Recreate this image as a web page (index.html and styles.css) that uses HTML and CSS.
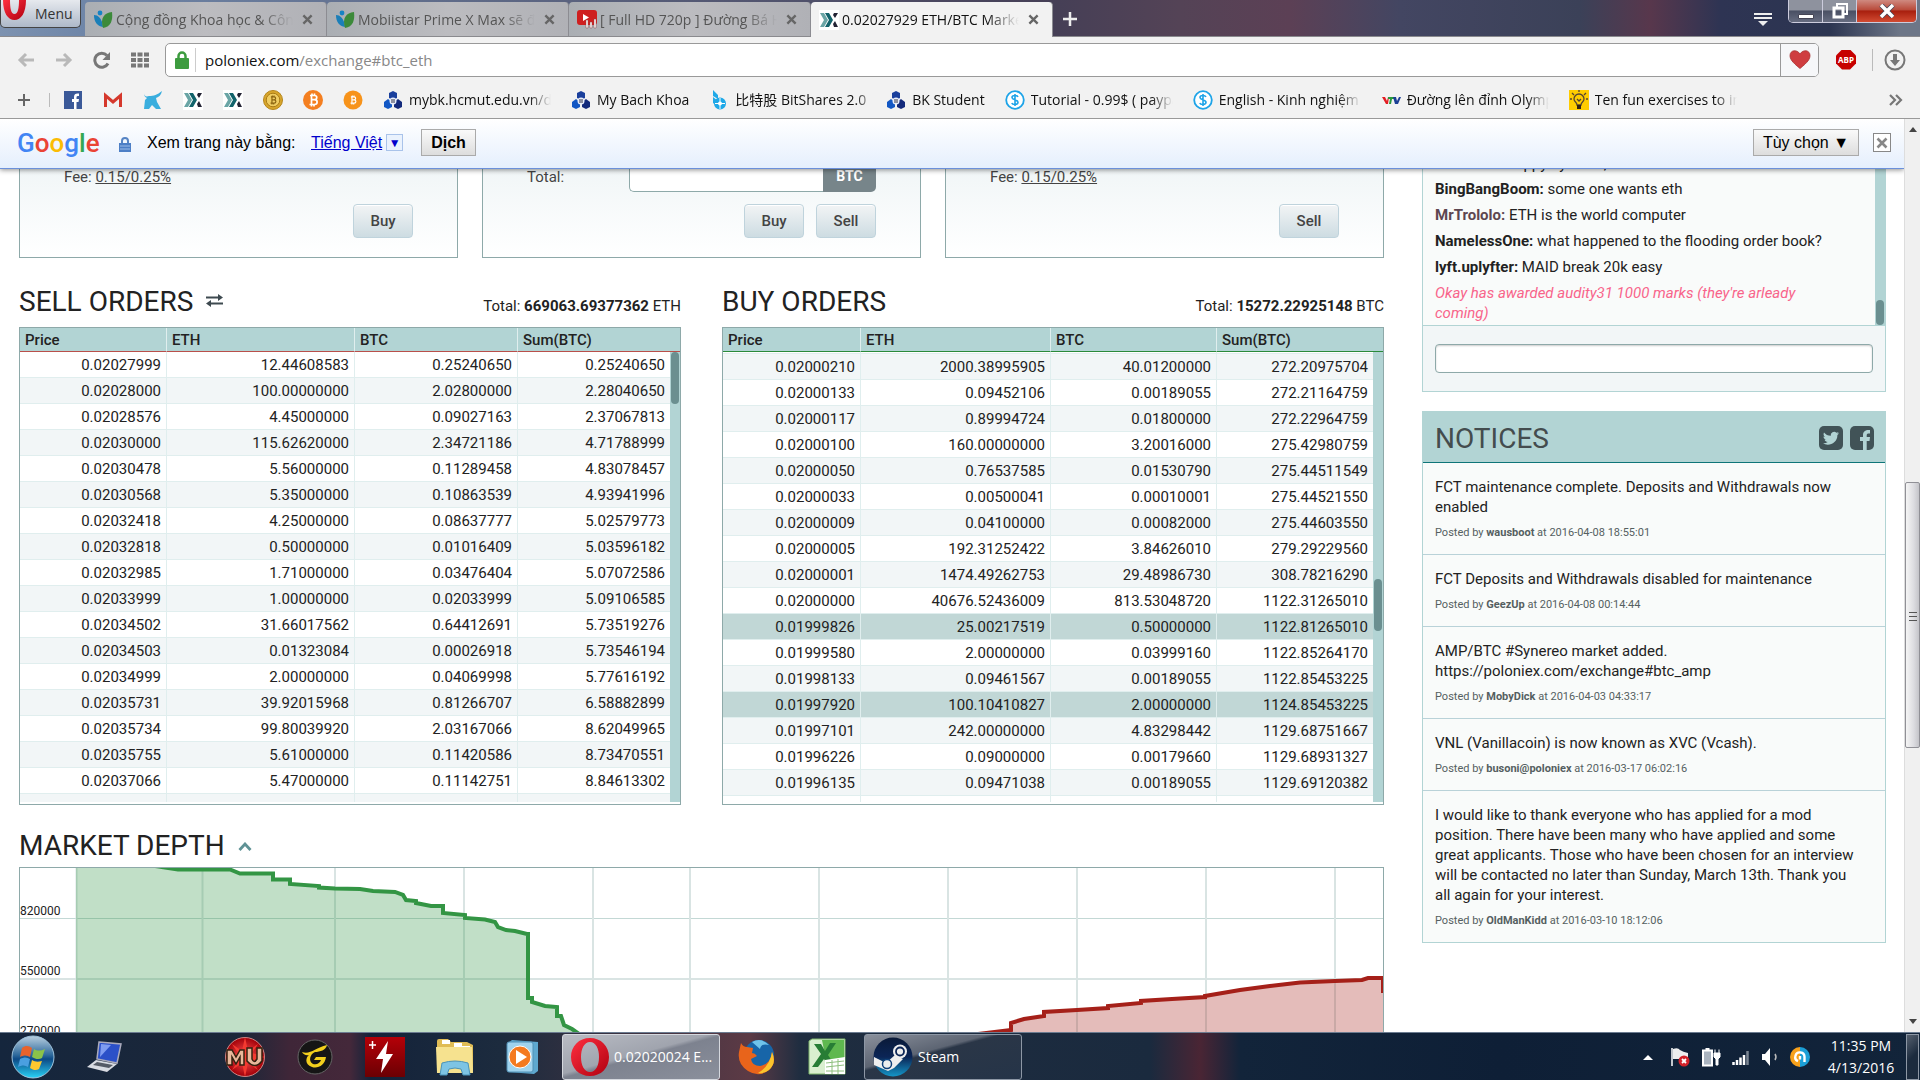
FILE: index.html
```html
<!DOCTYPE html>
<html lang="vi">
<head>
<meta charset="utf-8">
<title>0.02027929 ETH/BTC Market - Poloniex</title>
<link rel="stylesheet" href="styles.css">
</head>
<body>
<svg class="defs" width="0" height="0" aria-hidden="true">
  <defs>
    <linearGradient id="orb" x1="0" y1="0" x2="0" y2="1"><stop offset="0" stop-color="#b9cfe0"/><stop offset=".45" stop-color="#2f6a9c"/><stop offset=".55" stop-color="#0d4a86"/><stop offset="1" stop-color="#28d3f7"/></linearGradient>
    <linearGradient id="redsq" x1="0" y1="0" x2="0" y2="1"><stop offset="0" stop-color="#b50008"/><stop offset="1" stop-color="#6b0003"/></linearGradient>
    <radialGradient id="mu"><stop offset="0" stop-color="#f55"/><stop offset="1" stop-color="#a30008"/></radialGradient>
    <linearGradient id="steam" x1="0" y1="0" x2="0" y2="1"><stop offset="0" stop-color="#0a1a38"/><stop offset=".5" stop-color="#0b2556"/><stop offset="1" stop-color="#1496c8"/></linearGradient>
    <linearGradient id="opera" x1="0" y1="0" x2="1" y2="1"><stop offset="0" stop-color="#ff3040"/><stop offset="1" stop-color="#b00010"/></linearGradient>
    <symbol id="i-leaf" viewBox="0 0 20 20"><circle cx="7" cy="4" r="2.400" fill="#1683c4"/><path d="M1 6c4 0 8 3 9 12C4 17 1 13 1 6z" fill="#1b7fb8"/><path d="M19 3C11 4 7 9 10 19c8-1 10-8 9-16z" fill="#3c8a3a"/></symbol>
    <symbol id="i-x" viewBox="0 0 12 12"><path d="M1.500 1.500l9 9M10.500 1.500l-9 9" stroke="currentColor" stroke-width="2.600" fill="none"/></symbol>
    <symbol id="i-polo" viewBox="0 0 20 20"><path fill="#fff" d="M0 0h20v20H0z"/><path d="M1 3h4l4 7-4 7H1l4-7z" fill="#6aa5a5"/><path d="M6 3h4l4 7-4 7H6l4-7z" fill="#12636b"/><path d="M15 3h4l-3 5-2-3zM14 14l2-3 3 6h-4z" fill="#223"/></symbol>
    <symbol id="i-bk" viewBox="0 0 20 20"><path d="M10 1l4 2v5l-4 2-4-2V3z" fill="#1a3f9c"/><path d="M5 9l4 3v5l-4 2-4-2v-5z" fill="#1257c4"/><path d="M15 9l4 3v5l-4 2-4-2v-5z" fill="#132a7c"/><circle cx="10" cy="11" r="3.500" fill="#e8eefc"/><path d="M8 10h4M8 12h4" stroke="#334" stroke-width="1"/></symbol>
    <symbol id="i-dollar" viewBox="0 0 20 20"><circle cx="10" cy="10" r="8.800" fill="#fff" stroke="#1ea4e8" stroke-width="1.800"/><path d="M13 7c-1-2-6-2-6 .5S13 9.500 13 12.300 7.500 15 6.800 13M10 4v12" stroke="#1ea4e8" stroke-width="1.600" fill="none"/></symbol>
    <symbol id="i-btc" viewBox="0 0 20 20"><path d="M7 5.500h4.500c3 0 3 4 0 4.200H8m3.500 0c3.500 0 3.500 4.800 0 4.800H6.500M8.500 5.500v9M9 3.500v2m2.500-2v2M8.500 14.500v2m2.500-2v2" stroke="currentColor" stroke-width="1.700" fill="none"/></symbol>
  </defs>
</svg>

<header class="titlebar">
  <button class="menu" type="button">
    <svg width="28" height="22" viewBox="0 0 28 22"><path d="M2 0C2 13 7 20 13.500 20S25 13 25 0h-7c0 8-1 14-4.500 14S9 8 9 0z" fill="url(#opera)"/></svg>
    <span>Menu</span>
  </button>
  <nav class="tabs">
    <a class="tab" href="#"><svg width="20" height="20"><use href="#i-leaf"/></svg><span class="tab-text">Cộng đồng Khoa học &amp; Công nghệ</span><svg class="close" width="11" height="11"><use href="#i-x"/></svg></a>
    <a class="tab" href="#"><svg width="20" height="20"><use href="#i-leaf"/></svg><span class="tab-text">Mobiistar Prime X Max sẽ được</span><svg class="close" width="11" height="11"><use href="#i-x"/></svg></a>
    <a class="tab" href="#"><svg width="20" height="20" viewBox="0 0 20 20"><rect y="1" width="20" height="15" rx="3" fill="#cf1f1f"/><path d="M6 5l6 3.500L6 12z" fill="#fff"/><path d="M9 19v-8h2v8zM13 19v-6h2v6zM17 19v-9h2v9z" fill="#fff" stroke="#844" stroke-width=".5"/></svg><span class="tab-text">[ Full HD 720p ] Đường Bá Hổ</span><svg class="close" width="11" height="11"><use href="#i-x"/></svg></a>
    <a class="tab active" href="#"><svg width="20" height="20"><use href="#i-polo"/></svg><span class="tab-text">0.02027929 ETH/BTC Market</span><svg class="close" width="11" height="11"><use href="#i-x"/></svg></a>
  </nav>
  <button class="newtab" type="button" aria-label="New tab"><svg width="14" height="14" viewBox="0 0 14 14"><path d="M7 0v14M0 7h14" stroke="#eee" stroke-width="2.500"/></svg></button>
  <svg class="tabmenu" width="18" height="14" viewBox="0 0 18 14"><path d="M0 1h18M0 5h18" stroke="#eee" stroke-width="2"/><path d="M4 8h10l-5 5z" fill="#eee"/></svg>
  <div class="controls">
    <button type="button" aria-label="Minimize"><svg width="18" height="18" viewBox="0 0 18 18"><path d="M1.500 12.500h15v4h-15z" fill="#fff" stroke="#445"/></svg></button>
    <button type="button" aria-label="Restore"><svg width="18" height="18" viewBox="0 0 18 18"><path d="M6 5V2h10v10h-3" fill="none" stroke="#fff" stroke-width="2"/><path d="M3 6h9v9H3z" fill="none" stroke="#fff" stroke-width="3"/></svg></button>
    <button class="shut" type="button" aria-label="Close window"><svg width="16" height="14" viewBox="0 0 16 14"><path d="M2 1l12 12M14 1L2 13" stroke="#445" stroke-width="5"/><path d="M2 1l12 12M14 1L2 13" stroke="#fff" stroke-width="3.500"/></svg></button>
  </div>
</header>

<div class="toolbar">
  <svg width="18" height="16" viewBox="0 0 18 16"><path d="M17 8H3M9 2L3 8l6 6" stroke="#b9b9b9" stroke-width="3" fill="none"/></svg>
  <svg width="18" height="16" viewBox="0 0 18 16"><path d="M1 8h14M9 2l6 6-6 6" stroke="#b9b9b9" stroke-width="3" fill="none"/></svg>
  <svg width="18" height="18" viewBox="0 0 18 18"><path d="M15 12.500A7 7 0 1 1 14 4.500" stroke="#777" stroke-width="3" fill="none"/><path d="M17 1v8H9.500z" fill="#777"/></svg>
  <svg width="18" height="16" viewBox="0 0 18 16"><path d="M0 2.500h18M0 8h18M0 13.500h18" stroke="#777" stroke-width="4" stroke-dasharray="5 1.500"/></svg>
  <div class="address">
    <svg width="14" height="18" viewBox="0 0 14 18"><path d="M3.500 9V5a3.500 3.500 0 0 1 7 0v4" stroke="#3d9c3f" stroke-width="2.500" fill="none"/><rect y="7" width="14" height="11" rx="1" fill="#3d9c3f"/></svg>
    <p class="url">poloniex.com<span>/exchange#btc_eth</span></p>
    <button class="heart" type="button" aria-label="Bookmark"><svg width="22" height="19" viewBox="0 0 22 19"><path d="M11 18.500C3 12 1 9 1 5.500 1 0 8-1 11 4c3-5 10-4 10 1.500 0 3.500-2 6.500-10 13z" fill="#cf3d40" stroke="#a33" stroke-width=".8"/></svg></button>
  </div>
  <div class="abp">ABP</div>
  <svg class="download" width="22" height="22" viewBox="0 0 22 22"><circle cx="11" cy="11" r="9.500" fill="none" stroke="#777" stroke-width="2"/><path d="M9 5h4v6h3l-5 6-5-6h3z" fill="#777"/></svg>
</div>

<nav class="bookmarks">
  <svg class="plus" width="14" height="14" viewBox="0 0 14 14"><path d="M7 1v12M1 7h12" stroke="#666" stroke-width="2"/></svg>
  <a href="#" aria-label="Facebook"><svg width="20" height="20" viewBox="0 0 20 20"><rect x="1" y="1" width="18" height="18" fill="#3b5998"/><path d="M11 19v-7H9V9h2V7c0-3 2-4 5-3.500V6c-2 0-2.500 0-2.500 1.500V9H16l-.5 3h-2v7z" fill="#fff"/></svg></a>
  <a href="#" aria-label="Gmail"><svg width="20" height="20" viewBox="0 0 20 20"><rect x="1" y="4" width="18" height="13" fill="#f2f2f2"/><path d="M2.500 17V5.500L10 12l7.500-6.500V17" stroke="#d5382c" stroke-width="3" fill="none"/></svg></a>
  <a href="#" aria-label="Bull"><svg width="20" height="20" viewBox="0 0 20 20"><path d="M1 3c0 3 2 4 5 3 5 0 8-1 13-5-1 4-3 6-6 7l1 4 4 7h-5l-4-4-3 4H1l1-9 2-2C2 7 1 6 1 3z" fill="#3aaede"/></svg></a>
  <a href="#" aria-label="Poloniex"><svg width="20" height="20"><use href="#i-polo"/></svg></a>
  <a href="#" aria-label="Poloniex"><svg width="20" height="20"><use href="#i-polo"/></svg></a>
  <a class="gold" href="#" aria-label="Bitcoin"><svg width="20" height="20" viewBox="0 0 20 20"><circle cx="10" cy="10" r="9.500" fill="#d8a62c" stroke="#b5851b"/><circle cx="10" cy="10" r="6.800" fill="#f0cd62" stroke="#a97a15"/><use href="#i-btc" x="3" y="3" width="14" height="14"/></svg></a>
  <a class="white" href="#" aria-label="Bitcoin"><svg width="20" height="20" viewBox="0 0 20 20"><circle cx="10" cy="10" r="10" fill="#f47f20"/><use href="#i-btc" width="20" height="20"/></svg></a>
  <a class="white" href="#" aria-label="Bitcoin"><svg width="20" height="20" viewBox="0 0 20 20"><circle cx="10" cy="10" r="9.500" fill="#f7931a"/><use href="#i-btc" x="3" y="3" width="14" height="14"/></svg></a>
  <a href="#"><svg width="20" height="20"><use href="#i-bk"/></svg><span>mybk.hcmut.edu.vn/dkmh</span></a>
  <a href="#"><svg width="20" height="20"><use href="#i-bk"/></svg><span>My Bach Khoa</span></a>
  <a href="#"><svg width="20" height="20" viewBox="0 0 20 20"><path d="M4 0l5 5v4l-5-3zM4 7l5 4v6l-5-4z" fill="#1fa9e8"/><circle cx="11" cy="13.500" r="4" fill="#fff" stroke="#1fa9e8" stroke-width="4"/><path d="M11 8v11M6 13.500h10" stroke="#fff" stroke-width="1"/></svg><span>比特股 BitShares 2.0</span></a>
  <a href="#"><svg width="20" height="20"><use href="#i-bk"/></svg><span>BK Student</span></a>
  <a href="#"><svg width="20" height="20"><use href="#i-dollar"/></svg><span>Tutorial - 0.99$ ( paypal )</span></a>
  <a href="#"><svg width="20" height="20"><use href="#i-dollar"/></svg><span>English - Kinh nghiệm học</span></a>
  <a href="#"><svg width="20" height="20" viewBox="0 0 20 20"><path d="M1 7h3l2 4 1-4h1l-1 7H5z" fill="#e31e24"/><path d="M7 7h6v2h-2l-1 5H8l1-5H7z" fill="#2a9a3c"/><path d="M12 7h3l1 4 2-4h2l-3 7h-3z" fill="#1c3f95"/></svg><span>Đường lên đỉnh Olympia</span></a>
  <a href="#"><svg width="20" height="20" viewBox="0 0 20 20"><path fill="#fc0" d="M0 0h20v20H0z"/><path d="M8 15c0-3-3-3-3-6a5 5 0 0 1 10 0c0 3-3 3-3 6zM10 0v2M3 3l2 2M17 3l-2 2M1 9h2M17 9h2M8 9l2 2 2-2" stroke="#543" stroke-width="1.300" fill="none"/><path d="M8 15h4v4H8z" fill="#321"/></svg><span>Ten fun exercises to improve</span></a>
  <svg class="more" width="14" height="12" viewBox="0 0 14 12"><path d="M1 1l5 5-5 5M7 1l5 5-5 5" stroke="#777" stroke-width="2.200" fill="none"/></svg>
</nav>

<div class="window">
  <div class="frame">
    <div class="translate">
      <span class="google"><b class="bl">G</b><b class="re">o</b><b class="ye">o</b><b class="bl">g</b><b class="gr">l</b><b class="re">e</b></span>
      <svg class="lock" width="12" height="15" viewBox="0 0 12 15"><path d="M3 7V4a3 3 0 0 1 6 0v3" stroke="#5684c4" stroke-width="2" fill="none"/><path d="M0 6h12v9H0z" fill="#4d7fc6"/><path d="M1 9h10M1 12h10" stroke="#9dbde8"/></svg>
      <span class="ask">Xem trang này bằng:</span>
      <a class="lang" href="#">Tiếng Việt</a>
      <button class="drop" type="button" aria-label="Choose language">▼</button>
      <button class="grey strong" type="button">Dịch</button>
      <button class="grey options" type="button">Tùy chọn ▼</button>
      <button class="dismiss" type="button" aria-label="Close"><svg width="12" height="12"><use href="#i-x"/></svg></button>
    </div>

    <div class="page">
      <main class="main">
        <section class="trades">
          <form class="trade">
            <p class="fee">Fee: <a href="#">0.15/0.25%</a></p>
            <div class="actions"><button class="btn" type="button">Buy</button></div>
          </form>
          <form class="trade">
            <div class="total"><label for="total">Total:</label><input id="total" type="text"><span>BTC</span></div>
            <div class="actions"><button class="btn" type="button">Buy</button><button class="btn" type="button">Sell</button></div>
          </form>
          <form class="trade">
            <p class="fee">Fee: <a href="#">0.15/0.25%</a></p>
            <div class="actions"><button class="btn" type="button">Sell</button></div>
          </form>
        </section>

        <div class="orders">
          <section>
            <div class="head"><h2>SELL ORDERS <svg class="swap" width="17" height="13" viewBox="0 0 17 13"><path d="M0 3.500h13M17 9.500H4" stroke="#3e4a50" stroke-width="2.200"/><path d="M12 0l5 3.500L12 7zM5 6L0 9.500 5 13z" fill="#3e4a50"/></svg></h2><p>Total: <b>669063.69377362</b> ETH</p></div>
            <div class="book sell">
              <div class="clip">
              <table>
                <thead><tr><th>Price</th><th>ETH</th><th>BTC</th><th>Sum(BTC)</th></tr></thead>
                <tbody>
                  <tr><td>0.02027999</td><td>12.44608583</td><td>0.25240650</td><td>0.25240650</td></tr>
                  <tr><td>0.02028000</td><td>100.00000000</td><td>2.02800000</td><td>2.28040650</td></tr>
                  <tr><td>0.02028576</td><td>4.45000000</td><td>0.09027163</td><td>2.37067813</td></tr>
                  <tr><td>0.02030000</td><td>115.62620000</td><td>2.34721186</td><td>4.71788999</td></tr>
                  <tr><td>0.02030478</td><td>5.56000000</td><td>0.11289458</td><td>4.83078457</td></tr>
                  <tr><td>0.02030568</td><td>5.35000000</td><td>0.10863539</td><td>4.93941996</td></tr>
                  <tr><td>0.02032418</td><td>4.25000000</td><td>0.08637777</td><td>5.02579773</td></tr>
                  <tr><td>0.02032818</td><td>0.50000000</td><td>0.01016409</td><td>5.03596182</td></tr>
                  <tr><td>0.02032985</td><td>1.71000000</td><td>0.03476404</td><td>5.07072586</td></tr>
                  <tr><td>0.02033999</td><td>1.00000000</td><td>0.02033999</td><td>5.09106585</td></tr>
                  <tr><td>0.02034502</td><td>31.66017562</td><td>0.64412691</td><td>5.73519276</td></tr>
                  <tr><td>0.02034503</td><td>0.01323084</td><td>0.00026918</td><td>5.73546194</td></tr>
                  <tr><td>0.02034999</td><td>2.00000000</td><td>0.04069998</td><td>5.77616192</td></tr>
                  <tr><td>0.02035731</td><td>39.92015968</td><td>0.81266707</td><td>6.58882899</td></tr>
                  <tr><td>0.02035734</td><td>99.80039920</td><td>2.03167066</td><td>8.62049965</td></tr>
                  <tr><td>0.02035755</td><td>5.61000000</td><td>0.11420586</td><td>8.73470551</td></tr>
                  <tr><td>0.02037066</td><td>5.47000000</td><td>0.11142751</td><td>8.84613302</td></tr>
                  <tr><td></td><td></td><td></td><td></td></tr>
                </tbody>
              </table>
              <div class="track"><div class="thumb"></div></div>
              </div>
            </div>
          </section>
          <section>
            <div class="head"><h2>BUY ORDERS</h2><p>Total: <b>15272.22925148</b> BTC</p></div>
            <div class="book buy">
              <div class="clip">
              <table>
                <thead><tr><th>Price</th><th>ETH</th><th>BTC</th><th>Sum(BTC)</th></tr></thead>
                <tbody>
                  <tr class="cut"><td></td><td></td><td></td><td></td></tr>
                  <tr><td>0.02000210</td><td>2000.38995905</td><td>40.01200000</td><td>272.20975704</td></tr>
                  <tr><td>0.02000133</td><td>0.09452106</td><td>0.00189055</td><td>272.21164759</td></tr>
                  <tr><td>0.02000117</td><td>0.89994724</td><td>0.01800000</td><td>272.22964759</td></tr>
                  <tr><td>0.02000100</td><td>160.00000000</td><td>3.20016000</td><td>275.42980759</td></tr>
                  <tr><td>0.02000050</td><td>0.76537585</td><td>0.01530790</td><td>275.44511549</td></tr>
                  <tr><td>0.02000033</td><td>0.00500041</td><td>0.00010001</td><td>275.44521550</td></tr>
                  <tr><td>0.02000009</td><td>0.04100000</td><td>0.00082000</td><td>275.44603550</td></tr>
                  <tr><td>0.02000005</td><td>192.31252422</td><td>3.84626010</td><td>279.29229560</td></tr>
                  <tr><td>0.02000001</td><td>1474.49262753</td><td>29.48986730</td><td>308.78216290</td></tr>
                  <tr><td>0.02000000</td><td>40676.52436009</td><td>813.53048720</td><td>1122.31265010</td></tr>
                  <tr class="flash"><td>0.01999826</td><td>25.00217519</td><td>0.50000000</td><td>1122.81265010</td></tr>
                  <tr><td>0.01999580</td><td>2.00000000</td><td>0.03999160</td><td>1122.85264170</td></tr>
                  <tr><td>0.01998133</td><td>0.09461567</td><td>0.00189055</td><td>1122.85453225</td></tr>
                  <tr class="flash"><td>0.01997920</td><td>100.10410827</td><td>2.00000000</td><td>1124.85453225</td></tr>
                  <tr><td>0.01997101</td><td>242.00000000</td><td>4.83298442</td><td>1129.68751667</td></tr>
                  <tr><td>0.01996226</td><td>0.09000000</td><td>0.00179660</td><td>1129.68931327</td></tr>
                  <tr><td>0.01996135</td><td>0.09471038</td><td>0.00189055</td><td>1129.69120382</td></tr>
                  <tr><td></td><td></td><td></td><td></td></tr>
                </tbody>
              </table>
              <div class="track"><div class="thumb"></div></div>
              </div>
            </div>
          </section>
        </div>

        <section class="depth">
          <div class="head"><h2>MARKET DEPTH <svg class="caret" width="14" height="9" viewBox="0 0 14 9"><path d="M1.500 8L7 2l5.500 6" stroke="#5f9295" stroke-width="2.800" fill="none"/></svg></h2></div>
          <div class="chart">
            <svg viewBox="20 868 1363 168" preserveAspectRatio="none">
              <path d="M20 918.500H1383" stroke="#c3d8d5" stroke-width="1"/>
              <path d="M20 979H1383M76.500 868v168M202.500 868v168M335 868v168M464 868v168M593 868v168M690 868v168M819 868v168M948 868v168M1077 868v168M1206 868v168M1335 868v168" stroke="#d9e4e3" stroke-width="2"/>
              <path d="M76 868H155L178 870H230L240 874H273V880H290V884L319 887L335 888L360 889L373 891L395 892L403 895L406 900L416 901V903L431 906H443V913L465 915V918L485 919L495 922L498 927L506 930L515 931L528 934V998H532V1002L545 1006L557 1007V1016H561L564 1025L572 1029L582 1036H76z" fill="#339544" fill-opacity=".3"/>
              <path d="M155 866L178 869.500H230L240 873.500H273V879.500H290V884L319 886V887.500L335 888.500L360 889L373 891L395 892L403 895L406 900L416 901V903L431 906H443V913L465 915V918L485 919.500L495 922L498 927L506 930L515 931L527 934H528V998H532V1002L545 1006L557 1007V1016H561L564 1025L572 1029L582 1036" stroke="#339544" stroke-width="4" fill="none"/>
              <path d="M978 1034L1011 1030V1023L1024 1019L1044 1016V1012L1077 1010L1108 1008V1006L1141 1003V1001L1172 999L1205 997V996L1240 990L1270 986L1300 982L1335 981L1362 980L1368 978H1383V1036H978z" fill="#a52019" fill-opacity=".3"/>
              <path d="M978 1034L1011 1030V1023L1024 1019L1044 1016V1012L1077 1010L1108 1008V1006L1141 1003V1001L1172 999L1205 997V996L1240 990L1270 986L1300 982.500L1335 981L1362 980L1368 978H1383V993" stroke="#a52019" stroke-width="4" fill="none"/>
            </svg>
            <div class="ticks"><span>820000</span><span>550000</span><span>270000</span></div>
          </div>
        </section>
      </main>

      <aside class="side">
        <section class="chat">
          <div class="log">
            <p class="above">happy by noon,</p>
            <p><b>BingBangBoom:</b> some one wants eth</p>
            <p><b class="muted">MrTrololo:</b> ETH is the world computer</p>
            <p><b>NamelessOne:</b> what happened to the flooding order book?</p>
            <p><b>lyft.uplyfter:</b> MAID break 20k easy</p>
            <p class="award">Okay has awarded audity31 1000 marks (they're arleady coming)</p>
            <div class="track"><div class="thumb"></div></div>
          </div>
          <div class="say"><input type="text" aria-label="Chat message"></div>
        </section>

        <section class="notices">
          <header><h2>NOTICES</h2>
            <a href="#" aria-label="Twitter"><svg width="24" height="24" viewBox="0 0 24 24"><rect width="24" height="24" rx="5" fill="#415357"/><path d="M20 7.300c-.6.300-1.200.4-1.900.5.700-.4 1.200-1 1.400-1.800-.6.400-1.300.6-2.100.8a3.300 3.300 0 0 0-5.600 3C9 9.700 6.600 8.400 5 6.400c-.9 1.500-.4 3.400 1 4.400-.5 0-1-.2-1.500-.4 0 1.600 1.100 2.900 2.600 3.200-.5.100-1 .2-1.500.1.400 1.300 1.600 2.200 3.100 2.300A6.600 6.600 0 0 1 4 17.300c5.500 3.500 14.600 0 14.400-8.300.6-.5 1.200-1 1.600-1.700z" fill="#b2d4d4"/></svg></a>
            <a href="#" aria-label="Facebook"><svg width="24" height="24" viewBox="0 0 24 24"><rect width="24" height="24" rx="5" fill="#415357"/><path d="M13 24v-9h-3v-4h3V9c0-4 3-5.500 7-5v3.500c-2.500-.2-3.300.2-3.300 2V11H20l-.5 4h-2.800v9z" fill="#b2d4d4"/></svg></a>
          </header>
          <article><p>FCT maintenance complete. Deposits and Withdrawals now enabled</p><small>Posted by <b>wausboot</b> at 2016-04-08 18:55:01</small></article>
          <article><p>FCT Deposits and Withdrawals disabled for maintenance</p><small>Posted by <b>GeezUp</b> at 2016-04-08 00:14:44</small></article>
          <article><p>AMP/BTC #Synereo market added. https://poloniex.com/exchange#btc_amp</p><small>Posted by <b>MobyDick</b> at 2016-04-03 04:33:17</small></article>
          <article><p>VNL (Vanillacoin) is now known as XVC (Vcash).</p><small>Posted by <b>busoni@poloniex</b> at 2016-03-17 06:02:16</small></article>
          <article><p>I would like to thank everyone who has applied for a mod position. There have been many who have applied and some great applicants. Those who have been chosen for an interview will be contacted no later than Sunday, March 13th. Thank you all again for your interest.</p><small>Posted by <b>OldManKidd</b> at 2016-03-10 18:12:06</small></article>
        </section>
      </aside>
    </div>
  </div>
  <div class="scroll">
    <svg width="8" height="5" viewBox="0 0 8 5"><path d="M0 5l4-5 4 5z" fill="#444"/></svg>
    <div class="rail"><div class="grip"></div></div>
    <svg width="8" height="5" viewBox="0 0 8 5"><path d="M0 0l4 5 4-5z" fill="#444"/></svg>
  </div>
</div>

<footer class="taskbar">
  <button class="slot orb" type="button" aria-label="Start"><svg width="44" height="44" viewBox="0 0 44 44"><circle cx="22" cy="22" r="21" fill="url(#orb)" stroke="#9fc3dc" stroke-width="1"/><path d="M11 13c4-3 7-2 10 0l-2 9c-3-2-6-2-10 0z" fill="#e8632c"/><path d="M23 14c3 2 7 2 11 0l-3 9c-3 2-7 1-10-1z" fill="#8bc34a"/><path d="M9 24c4-2 7-2 10 0l-2 8c-3-2-6-2-10 0z" fill="#4a9fe0"/><path d="M21 25c3 2 6 2 10 1l-3 8c-3 2-6 1-9-1z" fill="#fdc82f"/></svg></button>
  <button class="slot" type="button" aria-label="Computer"><svg width="40" height="36" viewBox="0 0 40 36"><path d="M14 3l22 2-4 19-20-4z" fill="#2b50c8" stroke="#aab" stroke-width="1.500"/><path d="M16 5l10 1-11 12z" fill="#7f9cf0"/><path d="M11 21l21 4-10 8L2 28z" fill="#d8dbe2"/><path d="M12 23l16 3-4 3-16-3z" fill="#555b66"/></svg></button>
  <span class="slot"></span>
  <button class="slot" type="button" aria-label="MU"><svg width="42" height="42" viewBox="0 0 42 42"><circle cx="21" cy="21" r="19.500" fill="url(#mu)" stroke="#c88"/><path d="M21 1l3 14 10-7-6 9 13 4-13 4 6 9-10-7-3 14-3-14-10 7 6-9-13-4 13-4-6-9 10 7z" fill="#f43a30"/><path d="M3 29V14h5l4 7 4-7h4v15h-4v-8l-4 7-4-7v8zM23 12h5v11q2 5 5 0V12h5v13q-7 9-15 0z" fill="#e8b89c" stroke="#321" stroke-width="1.500"/></svg></button>
  <button class="slot" type="button" aria-label="Garena"><svg width="36" height="40" viewBox="0 0 36 40"><circle cx="18" cy="20" r="17" fill="#151515" stroke="#666"/><path d="M5 15c8 3 13-4 25-7-1 5-7 7-12 7-5 2-7 9-2 12 4 1 7-1 8-4h-7l2-3h10c-1 8-8 12-14 10-8-3-6-10-3-12-3 1-6-1-7-3z" fill="#f2cf1d"/></svg></button>
  <button class="slot" type="button" aria-label="Flash"><svg width="40" height="40" viewBox="0 0 40 40"><path fill="url(#redsq)" d="M0 0h40v40H0z"/><path d="M4 8h7M7.500 4v8" stroke="#fff" stroke-width="1.500"/><path d="M23 4L11 22h7l-2 14 12-19h-7z" fill="#fff"/></svg></button>
  <button class="slot" type="button" aria-label="Explorer"><svg width="42" height="40" viewBox="0 0 42 40"><path d="M3 4q0-2 2-2h9l3 3h16l6 3v27H3z" fill="#e0bc55"/><path d="M8 3h8v4H8zM20 6h8v4h-8zM28 9h8v4h-8z" fill="#fff"/><path d="M2 10h36l1 26H3z" fill="#f6e28f"/><path d="M6 38l2-12q13-4 26 0l2 12h-7l-2-6q-6-2-12 0l-2 6z" fill="#7dc4e4" stroke="#4a93b8"/></svg></button>
  <button class="slot wmp" type="button" aria-label="Media Player"><svg width="36" height="36" viewBox="0 0 36 36"><path d="M8 1l26 2v29l-4 3L4 33V4z" fill="#5ea8cf"/><rect x="3" y="3" width="26" height="30" rx="2" fill="#9fd3ee" stroke="#5190b5"/><circle cx="16" cy="18" r="11" fill="#f47a20" stroke="#fff"/><path d="M12 11l11 7-11 7z" fill="#fff"/></svg></button>
  <button class="task current" type="button"><svg width="38" height="40" viewBox="0 0 38 40"><path fill-rule="evenodd" d="M19 1C8 1 0 9 0 20s8 19 19 19 19-8 19-19S30 1 19 1zm0 4c6 0 9 7 9 15s-3 15-9 15-9-7-9-15 3-15 9-15z" fill="url(#opera)"/></svg><span>0.02020024 E...</span></button>
  <button class="slot" type="button" aria-label="Firefox"><svg width="38" height="38" viewBox="0 0 38 38"><circle cx="21" cy="17" r="15" fill="#1765a8"/><path d="M14 4q9-5 17 3-8-2-9 4z" fill="#6fc3ea"/><path d="M3 5q2 4 6 4l6 1-1 5q3 0 5 3l-6 3q1 7 9 7 11-2 12-14 5 11-3 18-10 8-21 1Q-1 26 1 14z" fill="#e8641b"/><path d="M34 14q5 11-3 18-5 4-11 3 12-7 14-21z" fill="#fbc42d"/></svg></button>
  <button class="slot" type="button" aria-label="Excel"><svg width="38" height="38" viewBox="0 0 38 38"><path d="M1 3l3-2h33v35H1z" fill="#d9efcf" stroke="#7cb56b"/><path d="M14 2h22v20H18z" fill="#5fb84f"/><path d="M6 6h7l4 7 5-8h6l-8 12 8 12h-7l-5-8-6 8H4l9-13z" fill="#277d35"/><path d="M17 22l20-3v17H17z" fill="#fff"/><path d="M18 25l18-2M18 29l18-2M18 33h18M24 22v14M30 21v15" stroke="#8fc07f"/></svg></button>
  <button class="task" type="button"><svg width="40" height="40" viewBox="0 0 40 40"><circle cx="20" cy="20" r="19.500" fill="url(#steam)"/><path d="M1 20l12 6 9-8 8 4-9 9-6 3-14-6z" fill="#eee"/><circle cx="27" cy="14.500" r="7" fill="#eee"/><circle cx="27" cy="14.500" r="4" fill="#eee" stroke="#0b2556" stroke-width="1.800"/><circle cx="14" cy="27" r="4.500" fill="#eee" stroke="#0e3f78" stroke-width="1.500"/></svg><span>Steam</span></button>
  <div class="tray">
    <svg class="hidden-icons" width="10" height="6" viewBox="0 0 10 6"><path d="M0 6l5-5 5 5z" fill="#fff"/></svg>
    <svg width="20" height="20" viewBox="0 0 20 20"><path d="M2 1v18" stroke="#fff" stroke-width="1.500"/><path d="M3 2q5-2 7 1 3 2 8 3v6H3z" fill="#eee"/><circle cx="14" cy="14" r="5.500" fill="#d2222a"/><path d="M12 12l4 4M16 12l-4 4" stroke="#fff" stroke-width="1.800"/></svg>
    <svg width="20" height="20" viewBox="0 0 20 20"><path d="M2 3.500h9v15H2z" fill="#a9b3bf" stroke="#fff" stroke-width="2"/><path d="M4.500 1h4v2h-4z" fill="#fff"/><path d="M13 6h6v4l-2 2v6h-2v-6l-2-2zM14 2.500v4M18 2.500v4" fill="#fff" stroke="#fff"/></svg>
    <svg width="18" height="16" viewBox="0 0 18 16"><path d="M1.500 16v-3M5 16v-5M8.500 16V8.500M12 16V6" stroke="#fff" stroke-width="2.500"/><path d="M15.500 16V2" stroke="#7b8693" stroke-width="2.500"/></svg>
    <svg width="18" height="18" viewBox="0 0 18 18"><path d="M1 6h3l5-6v18l-5-6H1z" fill="#fff"/><path d="M14 6q2 3 0 6" stroke="#bbb" stroke-width="1.500" fill="none"/></svg>
    <svg width="20" height="20" viewBox="0 0 20 20"><path d="M10 0a10 10 0 0 0 0 20z" fill="#f7a11b"/><path d="M10 0a10 10 0 0 1 0 20z" fill="#1c9fd6"/><path d="M8 14.200a4.600 4.600 0 1 1 6.500-4.200v5M10 12.500V9" stroke="#fff" stroke-width="2.400" fill="none"/></svg>
    <p class="clock">11:35 PM<br>4/13/2016</p>
    <button class="peek" type="button" aria-label="Show desktop"></button>
  </div>
</footer>
</body>
</html>
```

FILE: styles.css
```css
* { box-sizing: border-box; }
body, p, h2 { margin: 0; }
body {
  display: flex;
  flex-direction: column;
  height: 100vh;
  overflow: hidden;
  background: #fff;
  font-family: Roboto, "Liberation Sans", sans-serif;
  font-size: 15px;
  color: #222;
}
button, input { font: inherit; margin: 0; }
button { padding: 0; cursor: pointer; }
a { color: inherit; }
svg { flex: none; }
.defs { position: absolute; }

/* Browser chrome */
.titlebar, .toolbar, .bookmarks, .taskbar {
  flex: none;
  display: flex;
  font-family: "Open Sans", "Noto Sans", "Noto Sans CJK SC", sans-serif;
}
.titlebar {
  height: 37px;
  align-items: flex-start;
  border-bottom: 1px solid #8a8a8e;
  background: linear-gradient(90deg, #7d92b0 0, #6f86a8 84px, #453f56 1051px, #544356 1180px, #5c4055 1290px, #434662 1400px, #3b4158 1580px, #58374c 1650px, #2e3453 1720px, #2c3551 1830px, #6d7687 1900px);
  font-size: 14px;
}
.menu {
  display: flex;
  align-items: flex-start;
  gap: 6px;
  width: 81px;
  height: 28px;
  border: 1px solid #444;
  border-top: 0;
  border-radius: 0 0 5px 5px;
  background: linear-gradient(#e6e9ee, #aeb9c9);
  color: #333;
  line-height: 28px;
}
.tabs { display: flex; margin-left: 4px; padding-top: 2px; }
.tab {
  display: flex;
  align-items: center;
  gap: 3px;
  width: 242px;
  height: 34px;
  padding: 0 13px 0 8px;
  border: 1px solid #8c8c92;
  border-width: 0 1px 0 0;
  border-radius: 4px 4px 0 0;
  background: linear-gradient(90deg, #aaaeb3, #bcbcc0 50%, #b0b1b6);
  color: #555;
  text-decoration: none;
}
.tab-text {
  flex: 1;
  overflow: hidden;
  white-space: nowrap;
  -webkit-mask-image: linear-gradient(90deg, #000 82%, transparent);
  mask-image: linear-gradient(90deg, #000 82%, transparent);
}
.tab .close { color: #666; margin-left: 6px; }
.tab.active { height: 35px; background: #f2f2f2; color: #111; }
.newtab { margin: 12px 0 0 10px; width: 14px; height: 14px; border: 0; background: none; display: flex; }
.tabmenu { margin: 13px 16px 0 auto; }
.controls {
  display: flex;
  margin-right: 3px;
  border: 1px solid #ccd;
  border-top: 0;
  border-radius: 0 0 5px 5px;
  overflow: hidden;
}
.controls button {
  display: grid;
  place-items: center;
  width: 34px;
  height: 22px;
  border: 0;
  border-right: 1px solid #ccd;
  background: linear-gradient(#8e929e 45%, #4a5064 50%, #666c80);
}
.controls .shut { width: 59px; border: 0; background: linear-gradient(#cf8a80, #b94a3a 45%, #a81f0e 50%, #d24b32); }

.toolbar {
  align-items: center;
  gap: 20px;
  height: 45px;
  padding: 0 14px 0 17px;
  background: #f2f2f2;
}
.address {
  flex: 1;
  display: flex;
  align-items: center;
  height: 34px;
  margin-left: -4px;
  padding-left: 9px;
  border: 1px solid #999;
  border-radius: 5px;
  background: #fff;
  overflow: hidden;
}
.url { flex: 1; margin-left: 6px; padding-left: 9px; border-left: 1px solid #ccc; line-height: 24px; color: #111; }
.url span { color: #888; }
.heart { display: grid; place-items: center; width: 38px; height: 34px; border: 0; border-left: 1px solid #999; background: #f6f7f9; }
.abp {
  width: 20px;
  margin: 0 -4px 0 -3px;
  background: #c70000;
  clip-path: polygon(30% 0, 70% 0, 100% 30%, 100% 70%, 70% 100%, 30% 100%, 0 70%, 0 30%);
  color: #fff;
  font-size: 8px;
  font-weight: 700;
  line-height: 20px;
  text-align: center;
}
.download { box-sizing: content-box; padding-left: 11px; border-left: 1px solid #bbb; }

.bookmarks {
  align-items: center;
  gap: 20px;
  height: 37px;
  padding: 0 17px;
  border-bottom: 1px solid #999;
  background: #f2f2f2;
}
.bookmarks .plus { box-sizing: content-box; padding-right: 18px; margin-right: -7px; border-right: 1px solid #bbb; }
.bookmarks a { display: flex; align-items: center; gap: 6px; color: #111; text-decoration: none; white-space: nowrap; line-height: 24px; font-size: 14px; }
.bookmarks a span {
  max-width: 142px;
  overflow: hidden;
  -webkit-mask-image: linear-gradient(90deg, #000 120px, transparent 142px);
  mask-image: linear-gradient(90deg, #000 120px, transparent 142px);
}
.bookmarks .gold { color: #8b6410; }
.bookmarks .white { color: #fff; }
.more { margin-left: auto; }

/* Page viewport */
.window { flex: 1; min-height: 0; display: flex; }
.frame { flex: 1; min-width: 0; overflow: hidden; display: flex; flex-direction: column; }
.translate {
  flex: none;
  z-index: 1;
  display: flex;
  align-items: center;
  height: 50px;
  padding: 0 13px 2px 17px;
  border-bottom: 1px solid #6b90da;
  box-shadow: 0 1px 5px rgba(0, 0, 0, .45);
  background: linear-gradient(#fff, #e5effd);
  font-family: "Liberation Sans", Arial, sans-serif;
  font-size: 16px;
  color: #000;
}
.google { width: 84px; font-family: Roboto, sans-serif; font-size: 26px; line-height: 36px; }
.google b { font-weight: 500; }
.bl { color: #4285f4; } .re { color: #ea4335; } .ye { color: #fbbc05; } .gr { color: #34a853; }
.lock { margin: 4px 16px 0 18px; }
.ask { width: 154px; }
.lang { margin-left: 10px; color: #00c; }
.drop { width: 17px; height: 17px; margin-left: 4px; border: 1px solid #a9c3ea; background: #eaf2fd; color: #00c; font-size: 12px; line-height: 14px; }
.grey { height: 27px; padding: 0 9px; border: 1px solid #aaa; background: linear-gradient(#fafafa, #ddd); color: #000; }
.strong { margin-left: 18px; font-weight: 700; }
.options { margin-left: auto; }
.dismiss { display: grid; place-items: center; width: 18px; height: 19px; margin-left: 14px; border: 1px solid #888; background: #fff; color: #888; }

.page { flex: 1; min-height: 0; display: flex; gap: 38px; padding: 0 18px 0 19px; overflow: hidden; }
.main { flex: 1; min-width: 0; }
.side { flex: none; width: 464px; }

.trades { display: grid; grid-template-columns: repeat(3, 1fr); gap: 24px; }
.trade {
  display: flex;
  flex-direction: column;
  height: 89px;
  padding: 0 44px 19px;
  border: 1px solid #8ea9a9;
  border-top: 0;
  background: linear-gradient(#f1f6f7, #fff);
}
.fee { line-height: 16px; color: #444; }
.total { display: flex; height: 23px; margin-bottom: -2px; color: #444; line-height: 16px; }
.total label { flex: 1; }
.total input { width: 194px; height: 23px; border: 1px solid #8ea9a9; border-width: 0 0 1px 1px; border-radius: 0 0 0 5px; background: #fff; }
.total span { width: 53px; height: 23px; border-radius: 0 0 5px; background: #77858a; color: #fff; font-size: 14px; font-weight: 700; line-height: 14px; text-align: center; }
.actions { display: flex; justify-content: flex-end; gap: 12px; margin-top: auto; }
.btn {
  width: 60px;
  height: 34px;
  border: 1px solid #bfd3dc;
  border-radius: 4px;
  background: linear-gradient(#f2f4f5, #cddce2);
  box-shadow: inset 0 1px #fff;
  color: #444;
  font-weight: 500;
}

.orders { display: grid; grid-template-columns: 1fr 1fr; gap: 41px; }
.head { display: flex; align-items: baseline; justify-content: space-between; }
h2 { font-size: 28px; font-weight: 400; }
.orders .head { padding-top: 26px; height: 69px; line-height: 36px; }
.swap { margin-left: 6px; vertical-align: 4px; }
.book { position: relative; height: 478px; border: 1px solid #8ea9a9; }
.clip { height: 474px; overflow: hidden; }
table { width: 100%; table-layout: fixed; border-spacing: 0; }
th, td { padding: 2px 5px 0; border-right: 1px solid #e0eeee; }
th:last-child, td:last-child { border-right: 0; }
th { height: 24px; background: #b2d4d4; text-align: left; font-weight: 500; border-bottom: 1px solid #b94f4a; line-height: 21px; }
.buy th { border-bottom-color: #2b8a3a; }
td { height: 26px; border-bottom: 1px solid #e0eeee; text-align: right; line-height: 23px; }
td:last-child { padding-right: 15px; }
tr:nth-child(even) td { background: #f2f6f7; }
tr.cut td { height: 2px; padding: 0; line-height: 1px; }
tr.flash td { background: #c1d7d6; }
.sell th:nth-child(1) { width: 147px; }
.sell th:nth-child(2) { width: 188px; }
.sell th:nth-child(3) { width: 163px; }
.buy th:nth-child(1) { width: 138px; }
.buy th:nth-child(2) { width: 190px; }
.buy th:nth-child(3) { width: 166px; }
.track { position: absolute; top: 24px; right: 0; bottom: 2px; width: 10px; background: #b2d4d4; }
.thumb { width: 8px; margin: 0 auto; height: 52px; border-radius: 4px; background: #6b8f90; }
.buy .thumb { margin-top: 227px; }

.depth .head { padding-top: 23px; height: 62px; line-height: 36px; }
.caret { margin-left: 6px; vertical-align: 4px; }
.chart { position: relative; height: 169px; border: 1px solid #8ea9a9; border-bottom: 0; }
.chart svg { display: block; width: 100%; height: 168px; }
.ticks { position: absolute; top: 36px; left: 0; display: flex; flex-direction: column; gap: 46px; font-size: 12px; line-height: 14px; }

/* Sidebar */
.chat, .notices { border: 1px solid #b2d4d4; background: #f9fbfa; }
.chat { border-top: 0; }
.log { position: relative; height: 157px; padding: 0 36px 0 12px; border-bottom: 1px solid #b2d4d4; overflow: hidden; }
.log p { line-height: 20px; margin-bottom: 6px; }
.log .above { margin: -15px 0 5px 72px; }
.log .muted { color: #5d4650; }
.log b { font-weight: 700; }
.log .award { color: #f8648a; font-style: italic; }
.log .track { top: 0; bottom: 0; width: 10px; }
.log .thumb { height: 25px; margin-top: 131px; }
.say { padding: 18px 12px; background: #f2f6f7; }
.say input { display: block; width: 100%; height: 29px; border: 1px solid #8ea9a9; border-radius: 4px; background: #fff; box-shadow: inset 0 1px 2px #ccc; }
.notices { margin-top: 19px; }
.notices header { display: flex; align-items: center; gap: 7px; height: 51px; padding: 2px 11px 0 12px; background: #b2d4d4; border-bottom: 1px solid #0e7578; color: #444c4e; }
.notices h2 { flex: 1; }
.notices header a { display: flex; }
article { padding: 14px 24px 13px 12px; border-bottom: 1px solid #b9d2d8; }
article:last-child { border-bottom: 0; }
article p { line-height: 20px; }
small { display: block; margin-top: 8px; font-size: 11px; line-height: 16px; color: #555f61; }

.scroll { flex: none; width: 16px; display: flex; flex-direction: column; align-items: center; padding: 8px 0; background: #f0f0f0; border-left: 1px solid #ddd; }
.rail { flex: 1; width: 100%; display: flex; flex-direction: column; padding: 350px 0 0; }
.grip { height: 266px; border: 1px solid #909096; border-radius: 2px; background: linear-gradient(#555, #555) 50% 129px / 8px 1px no-repeat, linear-gradient(#555, #555) 50% 133px / 8px 1px no-repeat, linear-gradient(#555, #555) 50% 137px / 8px 1px no-repeat, linear-gradient(90deg, #f5f5f5, #dcdce0 60%, #c4c4c9); }

/* Desktop taskbar */
.taskbar {
  height: 48px;
  align-items: center;
  border-top: 1px solid #6b7b90;
  background: linear-gradient(90deg, #15263d 0, #1c2739 240px, #3f2638 290px, #44283a 350px, #14233a 370px, #1c2b3e 500px, #5c3a45 750px, #1f2d40 800px, #1a2a3e 1150px, #4a2534 1200px, #12243a 1240px, #0e1f36 1500px, #12243a);
}
.slot { display: grid; place-items: center; flex: none; width: 70px; height: 46px; border: 0; background: none; }
.orb { padding-right: 4px; }
.wmp { padding-right: 6px; }
.task {
  display: flex;
  align-items: center;
  gap: 5px;
  flex: none;
  width: 158px;
  height: 46px;
  margin: 0 2px;
  padding: 0 8px;
  border: 1px solid #8d97a5;
  border-radius: 3px;
  background: linear-gradient(165deg, #8a909c 0, #5d6573 38%, #2a3647 42%, #253448);
  color: #fff;
  font-size: 14px;
  white-space: nowrap;
}
.current { background: linear-gradient(165deg, #b9bcc4 0, #a0a4ae 45%, #7d828f 50%, #8b909c); border-color: #d5d8de; }
.tray { display: flex; align-items: center; gap: 11px; margin-left: auto; }
.hidden-icons { margin-right: 6px; }
.clock { width: 80px; margin: 0 -6px 0 0; color: #fff; text-align: center; font-size: 14px; line-height: 22px; }
.peek { width: 13px; height: 46px; margin-right: 1px; border: 1px solid #8d97a5; background: linear-gradient(135deg, #55606f, #1c2b3e 50%); }
```
